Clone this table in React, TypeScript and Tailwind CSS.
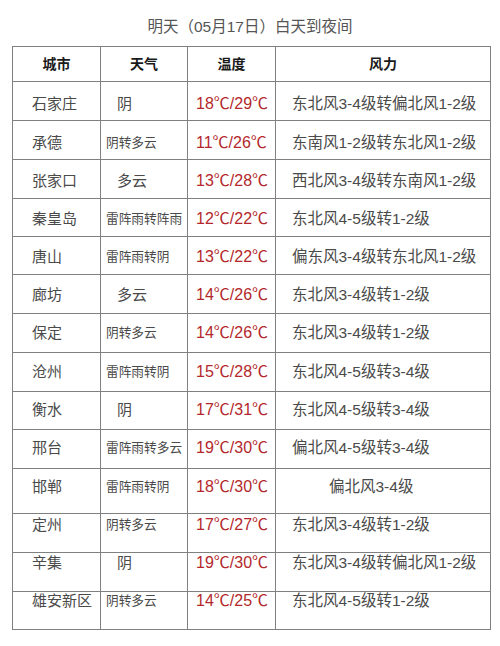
import React from "react";

const rows = [
  { city: "石家庄", weather: "阴", small: false, temp: "18℃/29℃", wind: "东北风3-4级转偏北风1-2级", h: "h-[39px]", pt: "pt-[13px]" },
  { city: "承德", weather: "阴转多云", small: true, temp: "11℃/26℃", wind: "东南风1-2级转东北风1-2级", h: "h-[39px]", pt: "pt-[13px]" },
  { city: "张家口", weather: "多云", small: false, temp: "13℃/28℃", wind: "西北风3-4级转东南风1-2级", h: "h-[39px]", pt: "pt-[12px]" },
  { city: "秦皇岛", weather: "雷阵雨转阵雨", small: true, temp: "12℃/22℃", wind: "东北风4-5级转1-2级", h: "h-[38px]", pt: "pt-[11px]" },
  { city: "唐山", weather: "雷阵雨转阴", small: true, temp: "13℃/22℃", wind: "偏东风3-4级转东北风1-2级", h: "h-[38px]", pt: "pt-[11px]" },
  { city: "廊坊", weather: "多云", small: false, temp: "14℃/26℃", wind: "东北风3-4级转1-2级", h: "h-[39px]", pt: "pt-[11px]" },
  { city: "保定", weather: "阴转多云", small: true, temp: "14℃/26℃", wind: "东北风3-4级转1-2级", h: "h-[39px]", pt: "pt-[10px]" },
  { city: "沧州", weather: "雷阵雨转阴", small: true, temp: "15℃/28℃", wind: "东北风4-5级转3-4级", h: "h-[39px]", pt: "pt-[10px]" },
  { city: "衡水", weather: "阴", small: false, temp: "17℃/31℃", wind: "东北风4-5级转3-4级", h: "h-[38px]", pt: "pt-[9px]" },
  { city: "邢台", weather: "雷阵雨转多云", small: true, temp: "19℃/30℃", wind: "偏北风4-5级转3-4级", h: "h-[39px]", pt: "pt-[9px]" },
  { city: "邯郸", weather: "雷阵雨转阴", small: true, temp: "18℃/30℃", wind: "偏北风3-4级", h: "h-[45px]", pt: "pt-[9px]", indent: true },
  { city: "定州", weather: "阴转多云", small: true, temp: "17℃/27℃", wind: "东北风3-4级转1-2级", h: "h-[39px]", pt: "pt-[2px]" },
  { city: "辛集", weather: "阴", small: false, temp: "19℃/30℃", wind: "东北风3-4级转偏北风1-2级", h: "h-[39px]", pt: "pt-[1px]" },
  { city: "雄安新区", weather: "阴转多云", small: true, temp: "14℃/25℃", wind: "东北风4-5级转1-2级", h: "h-[38px]", pt: "pt-[0px]" },
];

const grid = "grid grid-cols-[88px_87px_88px_215px]";
const cell = "border-r border-[#808080]";

export default function App() {
  return (
    <div className="w-[500px] h-[646px] bg-white font-['Liberation_Sans','Noto_Sans_CJK_SC',sans-serif]">
      {/* title */}
      <div className="pt-[17px] text-center text-[15.5px] leading-[20px] text-[#555]">
        明天（05月17日）白天到夜间
      </div>

      <div className="ml-[12px] mt-[9px] w-[479px] border-l border-t border-[#808080]">
        {/* header */}
        <div className={`${grid} h-[35px] border-b border-[#808080] text-[14px] font-bold text-[#1a1a1a]`}>
          <div className={`${cell} flex items-center justify-center`}>城市</div>
          <div className={`${cell} flex items-center justify-center`}>天气</div>
          <div className={`${cell} flex items-center justify-center`}>温度</div>
          <div className={`${cell} flex items-center justify-center`}>风力</div>
        </div>

        {rows.map((r) => (
          <div key={r.city} className={`${grid} ${r.h} border-b border-[#808080] leading-[18px]`}>
            <div className={`${cell} ${r.pt} pl-[19px] text-[15px] text-[#4a4a4a]`}>{r.city}</div>
            <div
              className={`${cell} ${r.pt} text-[#4a4a4a] whitespace-nowrap ${
                r.small ? "pl-[5px] text-[12.7px]" : "pl-[16px] text-[15px]"
              }`}
            >
              {r.weather}
            </div>
            <div className={`${cell} ${r.pt} pl-[8px] text-[16px] text-[#b3282b] whitespace-nowrap`}>{r.temp}</div>
            <div
              className={`${cell} ${r.pt} text-[15.5px] text-[#4a4a4a] whitespace-nowrap ${
                r.indent ? "pl-[53px]" : "pl-[16px]"
              }`}
            >
              {r.wind}
            </div>
          </div>
        ))}
      </div>
    </div>
  );
}
